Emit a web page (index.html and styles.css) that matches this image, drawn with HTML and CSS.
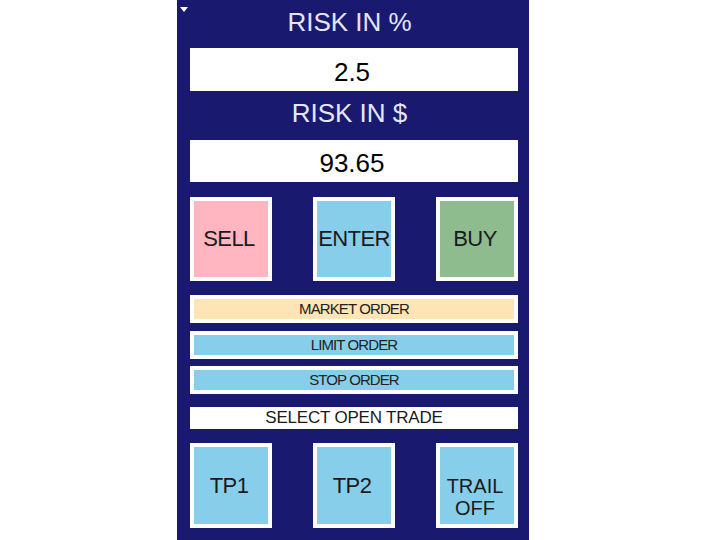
FILE: index.html
```html
<!DOCTYPE html>
<html>
<head>
<meta charset="utf-8">
<link rel="stylesheet" href="styles.css">
</head>
<body>
<div class="panel">
  <span class="caret"></span>
  <div class="label">RISK IN %</div>
  <div class="field">2.5</div>
  <div class="label label-2">RISK IN $</div>
  <div class="field field-2">93.65</div>
  <div class="btn-row">
    <div class="btn btn-sell">SELL</div>
    <div class="btn btn-enter">ENTER</div>
    <div class="btn btn-buy">BUY</div>
  </div>
  <div class="order order-market">MARKET ORDER</div>
  <div class="order order-limit">LIMIT ORDER</div>
  <div class="order order-stop">STOP ORDER</div>
  <div class="select">SELECT OPEN TRADE</div>
  <div class="btn-row btn-row-tp">
    <div class="btn btn-tp">TP1</div>
    <div class="btn btn-tp">TP2</div>
    <div class="btn btn-tp btn-multi">TRAIL<br>OFF</div>
  </div>
</div>
</body>
</html>
```
FILE: styles.css
```css
html, body {
  margin: 0;
  padding: 0;
  background: #ffffff;
}
body {
  font-family: "Liberation Sans", Arial, sans-serif;
  width: 720px;
  height: 540px;
  overflow: hidden;
}
.panel {
  position: relative;
  width: 352px;
  height: 540px;
  margin-left: 177px;
  box-sizing: border-box;
  padding: 0 11px 0 13px;
  background: #191970;
  display: flex;
  flex-direction: column;
}
.caret {
  position: absolute;
  left: 3px;
  top: 7px;
  width: 0;
  height: 0;
  border-left: 4px solid transparent;
  border-right: 4px solid transparent;
  border-top: 5px solid #ffffff;
}
.label {
  height: 48px;
  box-sizing: border-box;
  padding-top: 7px;
  padding-right: 9px;
  line-height: 30px;
  font-size: 26px;
  color: #e6e6fa;
  text-align: center;
  flex: none;
}
.label-2 {
  height: 49px;
}
.field {
  height: 43px;
  box-sizing: border-box;
  padding-top: 9px;
  padding-right: 4px;
  line-height: 30px;
  font-size: 26px;
  color: #000000;
  background: #ffffff;
  text-align: center;
  flex: none;
}
.field-2 {
  height: 42px;
  padding-top: 8px;
}
.btn-row {
  display: flex;
  justify-content: space-between;
  margin-top: 15px;
  flex: none;
}
.btn-row-tp {
  margin-top: 14px;
}
.btn {
  width: 82px;
  height: 84px;
  box-sizing: border-box;
  border: 4px solid #ffffff;
  padding-right: 4px;
  display: flex;
  align-items: center;
  justify-content: center;
  text-align: center;
  font-size: 22px;
  line-height: 22px;
  letter-spacing: -0.6px;
  color: #1a1a1a;
  white-space: nowrap;
}
.btn-enter {
  padding-right: 0;
}
.btn-tp {
  height: 85px;
}
.btn-multi {
  padding-top: 23px;
  font-size: 20px;
  line-height: 22.5px;
  letter-spacing: 0;
}
.btn-sell {
  background: #ffb6c1;
}
.btn-enter {
  background: #87ceeb;
}
.btn-buy {
  background: #8fbc8f;
}
.btn-tp {
  background: #87ceeb;
}
.order {
  height: 28px;
  box-sizing: border-box;
  border: 4px solid #ffffff;
  font-size: 15px;
  letter-spacing: -0.9px;
  line-height: 20px;
  text-align: center;
  color: #222222;
  flex: none;
}
.order-market {
  margin-top: 14px;
  background: #ffe4b5;
}
.order-limit {
  margin-top: 8px;
  background: #87ceeb;
}
.order-stop {
  margin-top: 7px;
  background: #87ceeb;
}
.select {
  margin-top: 13px;
  height: 22px;
  line-height: 22px;
  background: #ffffff;
  font-size: 17px;
  letter-spacing: -0.2px;
  text-align: center;
  color: #1a1a1a;
  flex: none;
}
```
